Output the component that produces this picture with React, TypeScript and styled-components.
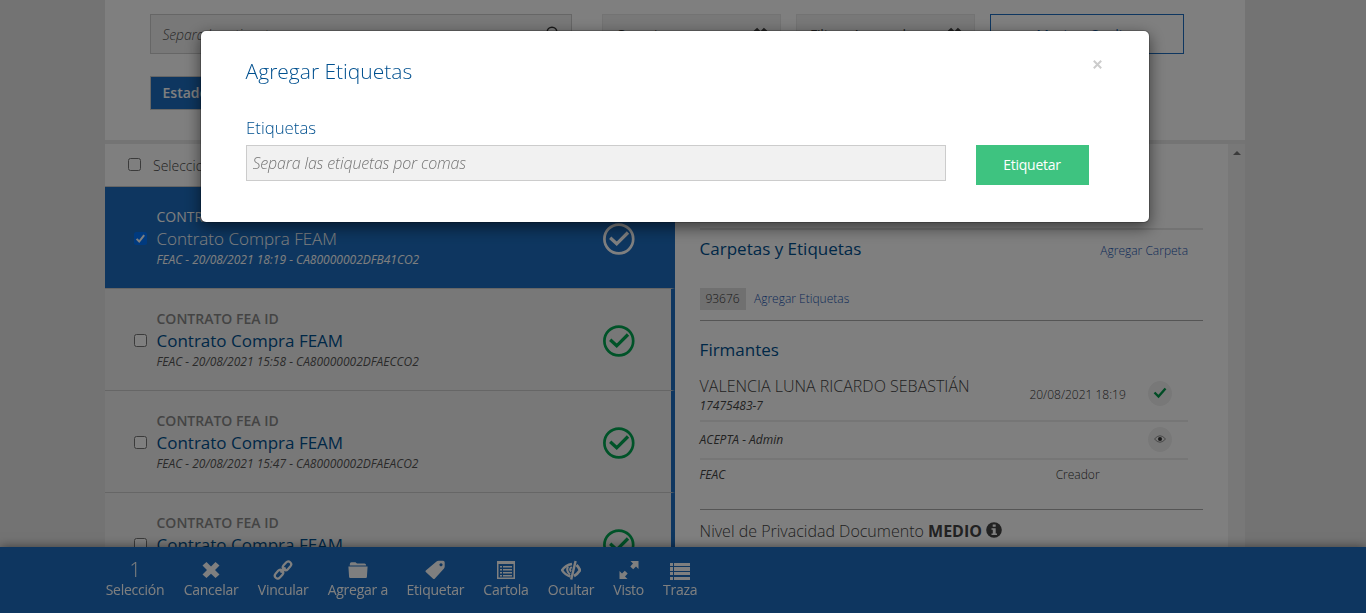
import React from 'react';
import styled, { createGlobalStyle, css } from 'styled-components';

const BLUE = '#1c6dc0';
const NAVY = '#00508f';

const Global = createGlobalStyle`
  * { box-sizing: border-box; }
  html, body { margin: 0; height: 100%; overflow: hidden; }
  body {
    background: #e6e6e6;
    font-family: "Open Sans", sans-serif;
    font-size: 14px;
    color: #555;
  }
  h2, h3, p { margin: 0; font-weight: 400; }
  input, button { font-family: inherit; }
`;

const Page = styled.div`
  width: 1140px;
  height: 613px;
  margin-left: 105px;
  overflow: hidden;
  display: flex;
  flex-direction: column;
  gap: 4px;
  background: #e9e9e9;
`;

const Filters = styled.section`
  flex: none;
  height: 140px;
  padding: 14px 61px 0 45px;
  background: #fff;
`;

const FilterRow = styled.div`
  display: flex;
  gap: 15px;
  margin-bottom: 22px;
`;

const SearchBox = styled.div`
  width: 422px;
  height: 40px;
  margin-right: 15px;
  padding: 0 11px 0 11.5px;
  display: flex;
  align-items: center;
  justify-content: space-between;
  background: #f1f1f1;
  border: 1px solid #ccc;
  font-size: 14px;
  letter-spacing: -0.15px;
  font-weight: 300;
  font-style: italic;
  color: #555;
`;

const FilterSelect = styled.div`
  width: 179px;
  height: 40px;
  padding: 0 12px 0 13px;
  display: flex;
  align-items: center;
  justify-content: space-between;
  background: #f1f1f1;
  border: 1px solid #e6e6e6;
  font-size: 14px;
  letter-spacing: -0.2px;
  color: #444;
`;

const OutlineButton = styled.div`
  width: 194px;
  height: 40px;
  display: flex;
  align-items: center;
  justify-content: center;
  border: 1px solid ${BLUE};
  color: ${BLUE};
  font-size: 14px;
  letter-spacing: -0.25px;
`;

const StateButton = styled.div`
  width: 120px;
  height: 34px;
  padding: 0 11.5px;
  line-height: 32px;
  background: ${BLUE};
  border: 1px solid #ccc;
  color: #fff;
  font-size: 14px;
  font-weight: 600;
`;

const Content = styled.div`
  flex: 1;
  min-height: 0;
  display: flex;
`;

const List = styled.div`
  width: 570px;
  height: 480px;
  overflow: hidden;
  display: flex;
  flex-direction: column;
`;

const SelectAll = styled.div`
  flex: none;
  height: 43px;
  padding-left: 23px;
  display: flex;
  align-items: center;
  gap: 12px;
  background: #fff;
  border-bottom: 1px solid #ccc;
  border-right: 4px solid ${BLUE};
  font-weight: 300;
  color: #444;
`;

const Check = styled.span<{ $on?: boolean }>`
  flex: none;
  width: 13px;
  height: 13px;
  margin-bottom: 2px;
  border-radius: 2.5px;
  display: flex;
  background: ${p => (p.$on ? '#0075ff' : '#fff')};
  border: ${p => (p.$on ? '0' : '1px solid #767676')};
`;

const Item = styled.div<{ $on?: boolean }>`
  flex: none;
  height: 102px;
  padding: 19px 36px 0 29px;
  display: flex;
  background: #f1f1f1;
  border-bottom: 1px solid #ccc;
  border-right: 4px solid ${BLUE};
  ${p => p.$on && css`
    background: ${BLUE};
    color: #fff;
  `}
  ${Check} { margin: 26px 9.5px 0 0; }
`;

const ItemBody = styled.div`
  flex: 1;
  white-space: nowrap;
`;

const Kind = styled.p<{ $on?: boolean }>`
  font-size: 14px;
  line-height: 22px;
  font-weight: ${p => (p.$on ? 400 : 600)};
  color: ${p => (p.$on ? '#fff' : '#888')};
`;

const ItemTitle = styled.h3<{ $on?: boolean }>`
  font-size: 17px;
  line-height: 22px;
  font-weight: ${p => (p.$on ? 300 : 400)};
  color: ${p => (p.$on ? '#fff' : NAVY)};
`;

const Meta = styled.p<{ $on?: boolean }>`
  padding-top: 1px;
  font-size: 12px;
  line-height: 18px;
  font-style: italic;
  color: ${p => (p.$on ? '#fff' : '#555')};
`;

const Status = styled.svg`
  flex: none;
  width: 32px;
  height: 32px;
  margin-top: 17px;
`;

const Detail = styled.div`
  flex: 1;
  padding: 0 25px;
  background: #fff;
  white-space: nowrap;
`;

const Folders = styled.section`
  margin-top: 84px;
  height: 93px;
  border-top: 2px solid #e6e6e6;
  border-bottom: 1px solid #aaa;
`;

const SectionHead = styled.div`
  display: flex;
  justify-content: space-between;
  padding: 7px 15px 0 0;
`;

const SectionTitle = styled.h3`
  margin-left: -0.4px;
  font-size: 17px;
  line-height: 24px;
  color: ${NAVY};
`;

const Action = styled.span`
  font-size: 12px;
  line-height: 28px;
  font-weight: 300;
  color: #1a55b0;
`;

const Tags = styled.div`
  display: flex;
  align-items: center;
  gap: 8px;
  margin-top: 20px;
`;

const Tag = styled.span`
  width: 46px;
  height: 22px;
  padding-right: 1px;
  line-height: 22px;
  text-align: center;
  background: #e0e0e0;
  font-size: 12px;
  font-weight: 300;
  color: #333;
`;

const Signers = styled.section`
  height: 189px;
  padding: 17px 15px 0 0;
  border-bottom: 1px solid #aaa;
`;

const SignerRow = styled.div<{ $h: number; $top?: number; $last?: boolean }>`
  height: ${p => p.$h}px;
  padding-top: ${p => p.$top ?? 0}px;
  display: flex;
  align-items: center;
  border-bottom: ${p => (p.$last ? '0' : '2px solid #ececec')};
`;

const SignerName = styled.div<{ $top?: number }>`
  width: 315px;
  margin-left: -0.4px;
  padding-top: ${p => p.$top ?? 0}px;
  font-size: 16px;
  line-height: 20px;
  font-weight: 300;
  color: #444;
`;

const SignerId = styled.p`
  font-size: 12px;
  line-height: 18px;
  font-weight: 400;
  font-style: italic;
  color: #444;
  ${SignerName} > span + & { padding-top: 1px; }
`;

const SignerNote = styled.span`
  width: 126px;
  text-align: center;
  font-size: 12px;
  font-weight: 300;
  color: #333;
`;

const RoundIcon = styled.span`
  width: 24px;
  height: 25px;
  margin: -2px 0 0 7px;
  border-radius: 50%;
  display: flex;
  align-items: center;
  justify-content: center;
  background: #f1f1f1;
`;

const Privacy = styled.p`
  display: flex;
  align-items: center;
  gap: 5px;
  margin-left: -0.4px;
  padding-top: 9px;
  font-size: 16px;
  line-height: 24px;
  font-weight: 300;
  color: #444;
  b { font-weight: 700; }
  svg { margin: -2px 0 0 -1px; }
`;

const Scrollbar = styled.div`
  width: 17px;
  padding: 7px 0 0 5px;
  background: #f1f1f1;
  svg { display: block; }
`;

const Toolbar = styled.nav`
  position: fixed;
  left: 0;
  right: 0;
  bottom: 0;
  height: 66px;
  padding: 12px 0 0 105.5px;
  display: flex;
  gap: 19.1px;
  background: ${BLUE};
  box-shadow: 0 0 10px rgba(0, 0, 0, 0.5);
  color: #fff;
`;

const Tool = styled.div<{ $w: number }>`
  width: ${p => p.$w}px;
  display: flex;
  flex-direction: column;
  align-items: center;
  font-size: 14px;
  line-height: 18px;
  letter-spacing: -0.25px;
  white-space: nowrap;
  svg { display: block; width: 20px; height: 20px; margin: 1px 0 1px; }
`;

const Count = styled.span`
  font-size: 20px;
  line-height: 22px;
  font-weight: 300;
`;

const Backdrop = styled.div`
  position: fixed;
  inset: 0;
  background: rgba(0, 0, 0, 0.5);
`;

const Dialog = styled.div`
  position: fixed;
  left: 200px;
  top: 30px;
  width: 950px;
  height: 193px;
  padding: 25px 60px 0 45px;
  background: #fff;
  background-clip: padding-box;
  border: 1px solid rgba(0, 0, 0, 0.2);
  border-radius: 6px;
  box-shadow: 0 5px 15px rgba(0, 0, 0, 0.5);
`;

const DialogHead = styled.div`
  display: flex;
  justify-content: space-between;
`;

const DialogTitle = styled.h2`
  margin-left: -0.4px;
  font-size: 21px;
  line-height: 30px;
  font-weight: 300;
  color: ${NAVY};
`;

const Close = styled.span`
  width: 9px;
  height: 9px;
  margin: 4px -13px 0 0;
  svg { display: block; }
`;

const Label = styled.label`
  display: block;
  margin-top: 30px;
  font-size: 16.8px;
  line-height: 24px;
  font-weight: 300;
  color: ${NAVY};
`;

const Form = styled.div`
  display: flex;
  gap: 30px;
  margin-top: 5px;
`;

const TagInput = styled.input`
  width: 700px;
  height: 36px;
  padding: 0 6px 1px 5.5px;
  border: 1px solid #ccc;
  border-radius: 0;
  background: #f1f1f1;
  font-size: 16px;
  letter-spacing: -0.16px;
  font-weight: 300;
  font-style: italic;
  &::placeholder { color: #757575; opacity: 1; }
`;

const Submit = styled.button`
  width: 113px;
  height: 40px;
  padding: 0 1px 2px 0;
  border: 0;
  background: #3ec380;
  color: #fff;
  font-size: 14px;
  letter-spacing: -0.25px;
`;

const Cross = ({ size = 16 }: { size?: number }) => (
  <svg width={size} height={size} viewBox="0 0 20 20">
    <path d="M5.5 1 10 5.5 14.5 1 19 5 14.2 10 19 15 14.5 19 10 14.5 5.5 19 1 15 5.8 10 1 5z" fill="currentColor" />
  </svg>
);

const StatusIcon = ({ on }: { on?: boolean }) => (
  <Status viewBox="0 0 32 32" fill="none" stroke={on ? '#fff' : '#00a651'}>
    <circle cx="15.8" cy="16" r="14.4" strokeWidth="2.700" />
    <path d="M7.2 14.8 13.7 20.8 25 9.500" strokeWidth="3.300" />
  </Status>
);

const items = [
  { on: true, date: '20/08/2021 18:19', id: 'CA80000002DFB41CO2' },
  { date: '20/08/2021 15:58', id: 'CA80000002DFAECCO2' },
  { date: '20/08/2021 15:47', id: 'CA80000002DFAEACO2' },
  { date: '20/08/2021 15:40', id: 'CA80000002DFAE9CO2' },
];

const tools: { label: string; w: number; icon: React.ReactNode }[] = [
  { label: 'Selección', w: 59, icon: <Count>1</Count> },
  { label: 'Cancelar', w: 55, icon: <svg viewBox="0 0 20 20"><path d="M5.5 2 10 6.5 14.5 2 18.5 5.500 14 10 18.500 14.500 14.500 18 10 13.800 5.500 18 1.500 14.500 6 10 1.500 5.500z" fill="currentColor" /></svg> },
  { label: 'Vincular', w: 51, icon: <svg viewBox="0 0 20 20" fill="none" stroke="currentColor" strokeWidth="2.200"><rect x="-4.800" y="-2.900" width="9.600" height="5.800" rx="2.900" transform="translate(14 5.800) rotate(-48)" /><rect x="-4.800" y="-2.900" width="9.600" height="5.800" rx="2.900" transform="translate(6 14.200) rotate(-48)" /><path d="M7.500 12.500 12.500 7.500" /></svg> },
  { label: 'Agregar a', w: 60, icon: <svg viewBox="0 0 20 20" fill="currentColor"><path d="M1.800 5.500V4.200Q1.800 2.200 3.500 2.200H7.500L9 3.500H16.500Q18 3.500 18.200 5.500zM.4 6.500H19.600L18.900 17Q18.800 18 17.800 18H2.200Q1.200 18 1.100 17z" /></svg> },
  { label: 'Etiquetar', w: 57, icon: <svg viewBox="0 0 20 20"><path fillRule="evenodd" d="M11.500 1.500Q12.300.7 13.500.7H18Q19.700.7 19.700 2.500V6.500Q19.700 7.700 19 8.500L9.700 18.700Q8.900 19.500 8.100 18.700L.8 12Q0 11.200.8 10.400zM16 3.200a1.600 1.600 0 1 0 .01 0z" fill="currentColor" /></svg> },
  { label: 'Cartola', w: 46, icon: <svg viewBox="0 0 20 20"><path d="M1 1H19V19H1zM2.500 4V17.500H17.500V4z" fillRule="evenodd" fill="currentColor" /><path d="M4 6h2v1.500H4zM7 6h9v1.500H7zM4 9h2v1.500H4zM7 9h9v1.500H7zM4 12h2v1.500H4zM7 12h9v1.500H7zM4 15h2v1.500H4zM7 15h9v1.500H7z" fill="currentColor" /></svg> },
  { label: 'Ocultar', w: 46, icon: <svg viewBox="0 0 20 20" fill="none" stroke="currentColor"><path d="M9.500 16.500Q4 15 1 10.200 4.500 5 11 4" strokeWidth="2.400" /><path d="M15.500 5Q17.700 7 19 10.200 16.500 14 13 16" strokeWidth="2.800" /><path d="M7 6.500Q4.800 11 9 14.500M10.800 7Q7.800 9 10 11.500" strokeWidth="2" /><path d="M14.600 1 10.200 19.500" strokeWidth="2.400" /></svg> },
  { label: 'Visto', w: 31, icon: <svg viewBox="0 0 20 20" fill="currentColor"><path d="M11.500 1H19.500V9L17 6.500 14.200 9.300 11.300 6.400 14 3.500zM8.500 19H.5V11L3 13.500 5.800 10.700 8.700 13.600 6 16.500z" /></svg> },
  { label: 'Traza', w: 34, icon: <svg viewBox="0 0 20 20" fill="currentColor" shapeRendering="crispEdges"><path d="M0 3h3v3H0zM4 3h16v3H4zM0 7h3v4H0zM4 7h16v4H4zM0 12h3v3H0zM4 12h16v3H4zM0 17h3v3H0zM4 17h16v3H4z" /></svg> },
];

export default function App() {
  return (
    <>
      <Global />
      <Page>
        <Filters>
          <FilterRow>
            <SearchBox>
              Separa las etiquetas por comas
              <svg width="14" height="16" viewBox="0 0 14 16" fill="none" stroke="#333" strokeWidth="1.500"><circle cx="6" cy="6" r="4.800" /><path d="m9.500 9.500 4 4.500" /></svg>
            </SearchBox>
            <FilterSelect>Carpetas<Cross size={15} /></FilterSelect>
            <FilterSelect>Filtros Avanzados<Cross size={15} /></FilterSelect>
            <OutlineButton>Mostrar Ocultos</OutlineButton>
          </FilterRow>
          <StateButton>Estado</StateButton>
        </Filters>
        <Content>
          <List>
            <SelectAll><Check />Seleccionar todos</SelectAll>
            {items.map(it => (
              <Item key={it.id} $on={it.on}>
                <Check $on={it.on}>
                  {it.on && <svg width="13" height="13" viewBox="0 0 13 13"><path d="m2.600 6.900 2.600 2.600 5-6.300" fill="none" stroke="#fff" strokeWidth="2" /></svg>}
                </Check>
                <ItemBody>
                  <Kind $on={it.on}>CONTRATO FEA ID</Kind>
                  <ItemTitle $on={it.on}>Contrato Compra FEAM</ItemTitle>
                  <Meta $on={it.on}>FEAC - {it.date} - {it.id}</Meta>
                </ItemBody>
                <StatusIcon on={it.on} />
              </Item>
            ))}
          </List>
          <Detail>
            <Folders>
              <SectionHead>
                <SectionTitle>Carpetas y Etiquetas</SectionTitle>
                <Action>Agregar Carpeta</Action>
              </SectionHead>
              <Tags><Tag>93676</Tag><Action>Agregar Etiquetas</Action></Tags>
            </Folders>
            <Signers>
              <SectionTitle>Firmantes</SectionTitle>
              <SignerRow $h={60} $top={6}>
                <SignerName $top={3}><span>VALENCIA LUNA RICARDO SEBASTIÁN</span><SignerId>17475483-7</SignerId></SignerName>
                <SignerNote>20/08/2021 18:19</SignerNote>
                <RoundIcon><svg width="14" height="12" viewBox="0 0 14 12"><path d="m1.500 5.500 4 4 7-8" fill="none" stroke="#00984a" strokeWidth="2.400" /></svg></RoundIcon>
              </SignerRow>
              <SignerRow $h={38}>
                <SignerName><SignerId>ACEPTA - Admin</SignerId></SignerName>
                <SignerNote />
                <RoundIcon><svg width="12" height="8" viewBox="0 0 12 8"><path d="M.5 4Q6-2.500 11.500 4 6 10.500.5 4z" fill="none" stroke="#777" strokeWidth=".8" /><circle cx="6" cy="4" r="2" fill="#333" /></svg></RoundIcon>
              </SignerRow>
              <SignerRow $h={29} $last>
                <SignerName $top={1}><SignerId>FEAC</SignerId></SignerName>
                <SignerNote>Creador</SignerNote>
              </SignerRow>
            </Signers>
            <Privacy>
              <span>Nivel de Privacidad Documento <b>MEDIO</b></span>
              <svg width="16" height="16" viewBox="0 0 16 16"><circle cx="8" cy="8" r="7.800" fill="#444" /><path d="M6.700 2.500h3v2.200h-3zM5.500 6.200h4.200v5.300h1.300V13H5.500v-1.500h1.300V7.700H5.500z" fill="#fff" /></svg>
            </Privacy>
          </Detail>
          <Scrollbar><svg width="8" height="4" viewBox="0 0 8 4"><path d="M0 4 4 0 8 4z" fill="#777" /></svg></Scrollbar>
        </Content>
      </Page>
      <Toolbar>
        {tools.map(t => <Tool key={t.label} $w={t.w}>{t.icon}{t.label}</Tool>)}
      </Toolbar>
      <Backdrop />
      <Dialog>
        <DialogHead>
          <DialogTitle>Agregar Etiquetas</DialogTitle>
          <Close><svg width="9" height="9" viewBox="0 0 9 9"><path d="m.8.8 7.400 7.400M8.200.8.8 8.200" stroke="#ccc" strokeWidth="2" /></svg></Close>
        </DialogHead>
        <Label htmlFor="tags">Etiquetas</Label>
        <Form>
          <TagInput id="tags" placeholder="Separa las etiquetas por comas" />
          <Submit>Etiquetar</Submit>
        </Form>
      </Dialog>
    </>
  );
}
